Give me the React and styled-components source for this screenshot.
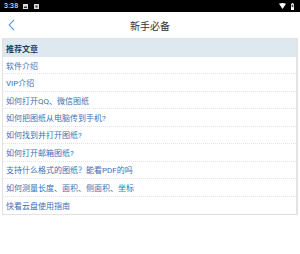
import React from "react";
import styled, { createGlobalStyle } from "styled-components";

const Global = createGlobalStyle`
  html, body { margin: 0; padding: 0; background: #fff; }
  body { font-family: Roboto, "Noto Sans CJK SC", sans-serif; }
  * { box-sizing: border-box; }
`;

const Screen = styled.div`
  width: 300px;
  height: 254px;
  background: #fff;
  display: flex;
  flex-direction: column;
  overflow: hidden;
`;

const StatusBar = styled.div`
  height: 12px;
  background: #000;
  color: #fff;
  display: flex;
  align-items: center;
  padding: 0 6px 0 4px;
  font-size: 7px;
  gap: 4px;
`;

const Clock = styled.span`
  font-family: Roboto, sans-serif;
  font-size: 7px;
  letter-spacing: 0.2px;
  margin-right: 1px;
`;

const Spacer = styled.div`
  flex: 1;
`;

const TopBar = styled.div`
  height: 26px;
  display: grid;
  grid-template-columns: 1fr auto 1fr;
  align-items: center;
  padding: 0 8px;
`;

const Title = styled.div`
  font-family: "Noto Sans CJK SC", sans-serif;
  font-size: 10px;
  color: #333;
`;

const Back = styled.div`
  display: flex;
  align-items: center;
`;

const Table = styled.div`
  margin: 0 2px 0 2px;
  border: 1px solid #e2e2e2;
  border-right: 2px solid #e4e4e4;
  display: flex;
  flex-direction: column;
`;

const HeaderRow = styled.div`
  height: 18px;
  background: #dee9ef;
  display: flex;
  align-items: center;
  padding-left: 3px;
  font-family: "Noto Sans CJK SC", sans-serif;
  font-weight: 700;
  font-size: 8px;
  color: #1f3b5e;
`;

const Row = styled.div`
  height: 17.44px;
  display: flex;
  align-items: center;
  padding-left: 3px;
  font-size: 8px;
  color: #4170b4;
  border-bottom: ${(p) => (p.$last ? "none" : "1px dotted #e2e2e2")};
`;

const items = [
  "软件介绍",
  "VIP介绍",
  "如何打开QQ、微信图纸",
  "如何把图纸从电脑传到手机?",
  "如何找到并打开图纸?",
  "如何打开邮箱图纸?",
  "支持什么格式的图纸？能看PDF的吗",
  "如何测量长度、面积、侧面积、坐标",
  "快看云盘使用指南",
];

export default function App() {
  return (
    <>
      <Global />
      <Screen>
        <StatusBar>
          <Clock>3:38</Clock>
          <svg width="5" height="5" viewBox="0 0 5 5">
            <rect x="0" y="0" width="5" height="5" fill="#ddd" />
            <rect x="1" y="2.5" width="3" height="1.5" fill="#333" />
          </svg>
          <svg width="5" height="5" viewBox="0 0 5 5" style={{ marginLeft: 2 }}>
            <rect x="0" y="0" width="5" height="5" fill="#ddd" />
            <rect x="1.5" y="1.5" width="2" height="2" fill="#333" />
          </svg>
          <Spacer />
          <svg width="7" height="6" viewBox="0 0 7 6">
            <path d="M0 0.8 Q3.5 -0.8 7 0.8 L3.5 6 Z" fill="#fff" />
          </svg>
          <svg width="3" height="7" viewBox="0 0 3 7" style={{ marginLeft: 1 }}>
            <rect x="0.8" y="0" width="1.4" height="1" fill="#fff" />
            <rect x="0" y="1" width="3" height="6" fill="#fff" />
            <rect x="0.6" y="1.6" width="1.8" height="2.6" fill="#555" />
          </svg>
        </StatusBar>
        <TopBar>
          <Back>
            <svg width="8" height="12" viewBox="0 0 8 12">
              <path d="M6 0.8 L1.2 6 L6 11.2" fill="none" stroke="#4b93dc" strokeWidth="1.1" />
            </svg>
          </Back>
          <Title>新手必备</Title>
          <div />
        </TopBar>
        <Table>
          <HeaderRow>推荐文章</HeaderRow>
          {items.map((t, i) => (
            <Row key={i} $last={i === items.length - 1}>
              {t}
            </Row>
          ))}
        </Table>
      </Screen>
    </>
  );
}
